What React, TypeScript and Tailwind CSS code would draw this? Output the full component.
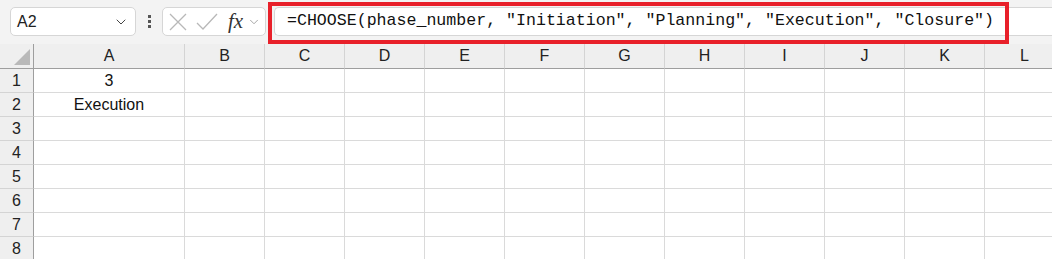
import { ChevronDown } from 'lucide-react'

const columns = ['A', 'B', 'C', 'D', 'E', 'F', 'G', 'H', 'I', 'J', 'K', 'L']
const rows = [1, 2, 3, 4, 5, 6, 7, 8]

const cells: Record<string, string> = {
  A1: '3',
  A2: 'Execution',
}

const formula = '=CHOOSE(phase_number, "Initiation", "Planning", "Execution", "Closure")'

export default function App() {
  return (
    <div className="h-[259px] w-[1052px] overflow-hidden bg-white" style={{ fontFamily: '"Liberation Sans", Arial, sans-serif' }}>
      {/* formula bar */}
      <div className="relative flex h-[44px] items-center bg-[#f3f3f3] pb-[1px]">
        <div className="ml-[10px] flex h-[29px] w-[126px] items-center justify-between rounded-[5px] border border-[#d6d6d6] bg-white pl-[6px] pr-[6px]">
          <span className="text-[16px] text-[#222]">A2</span>
          <ChevronDown size={16} strokeWidth={1.5} className="text-[#444]" />
        </div>
        <div className="ml-[11px] flex w-[4px] flex-col items-center gap-[2px]">
          <span className="h-[3px] w-[3px] bg-[#555]" />
          <span className="h-[3px] w-[3px] bg-[#555]" />
          <span className="h-[3px] w-[3px] bg-[#555]" />
        </div>
        <div className="ml-[11px] flex h-[29px] w-[104px] items-center rounded-[5px] border border-[#d6d6d6] bg-white pl-[6px]">
          <svg width="18" height="18" viewBox="0 0 18 18" className="text-[#b8b8b8]">
            <path d="M1 1 L17 17 M17 1 L1 17" stroke="currentColor" strokeWidth="1.3" fill="none" />
          </svg>
          <svg width="22" height="18" viewBox="0 0 22 18" className="ml-[9px] text-[#b8b8b8]">
            <path d="M1 10 L7 16 L21 1" stroke="currentColor" strokeWidth="1.3" fill="none" />
          </svg>
          <span className="ml-[10px] text-[21px] italic leading-none text-[#333]" style={{ fontFamily: '"Liberation Serif", serif' }}>
            fx
          </span>
          <ChevronDown size={14} strokeWidth={1.5} className="ml-[4px] text-[#999]" />
        </div>
        <div className="ml-[8px] flex h-[29px] flex-1 items-center rounded-l-[5px] border border-r-0 border-[#d6d6d6] bg-white pl-[12px]">
          <span className="whitespace-pre text-[16.6px] text-[#111]" style={{ fontFamily: '"Liberation Mono", "DejaVu Sans Mono", monospace' }}>
            {formula}
          </span>
        </div>
        <div className="pointer-events-none absolute left-[268px] top-[2px] h-[42px] w-[741px] border-[4px] border-[#e8202a]" />
      </div>

      {/* sheet */}
      <div className="grid grid-cols-[34px_151px_repeat(11,80px)]">
        <div className="relative h-[25px] border-b border-r border-[#9e9e9e] bg-[#efefef]">
          <div className="absolute bottom-[3px] right-[3px] h-0 w-0 border-b-[16px] border-l-[16px] border-b-[#b9b9b9] border-l-transparent" />
        </div>
        {columns.map((c) => (
          <div key={c} className="flex h-[25px] items-center justify-center border-b border-r border-b-[#9e9e9e] border-r-[#d4d4d4] bg-[#efefef] text-[16px] text-[#222]">
            {c}
          </div>
        ))}
        {rows.map((r) => (
          <Row key={r} r={r} />
        ))}
      </div>
    </div>
  )
}

function Row({ r }: { r: number }) {
  return (
    <>
      <div className="flex h-[24px] items-center justify-center border-b border-r border-b-[#d4d4d4] border-r-[#9e9e9e] bg-[#efefef] text-[16px] text-[#222]">
        {r}
      </div>
      {columns.map((c) => (
        <div key={c} className="flex h-[24px] items-center justify-center border-b border-r border-[#dadada] text-[16px] text-[#111]">
          {cells[`${c}${r}`] ?? ''}
        </div>
      ))}
    </>
  )
}
